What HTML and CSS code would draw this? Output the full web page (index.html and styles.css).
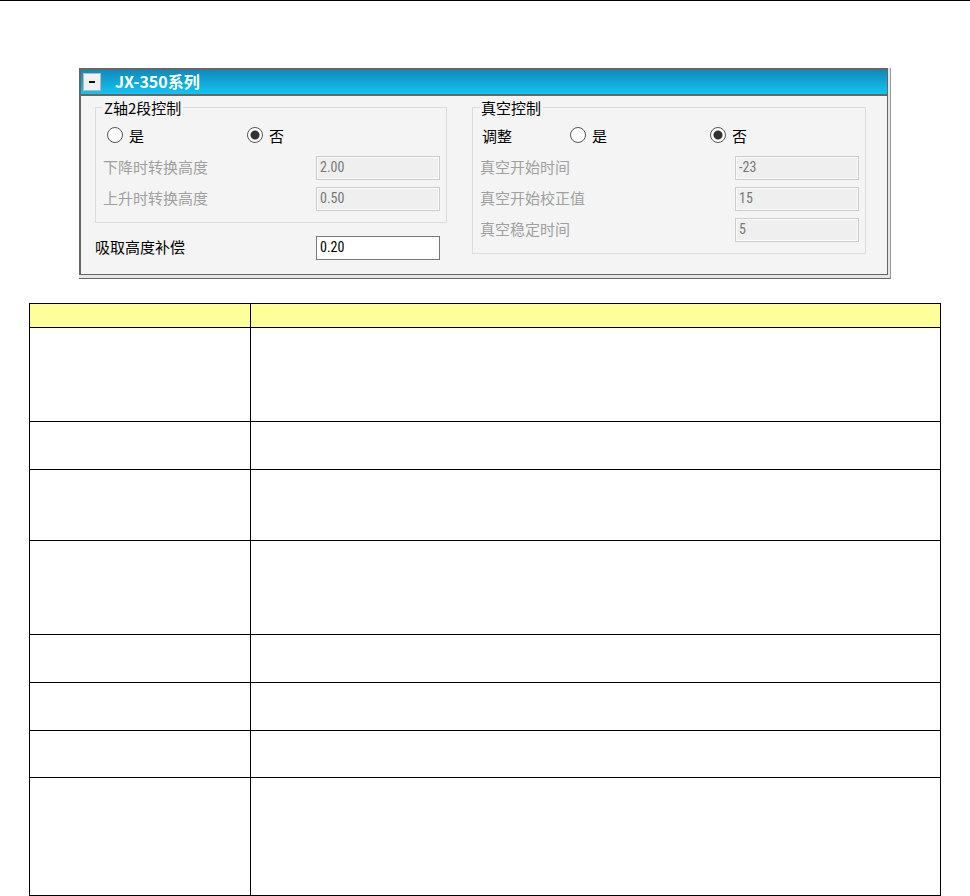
FILE: index.html
```html
<!DOCTYPE html>
<html lang="zh-CN">
<head>
<meta charset="utf-8">
<title>JX-350系列</title>
<link rel="stylesheet" href="styles.css">
</head>
<body>
<main class="page">
  <section class="frame">
    <div class="panel">
      <header class="titlebar">
        <button class="collapse" type="button" aria-label="JX-350系列"><svg width="8" height="2" viewBox="0 0 8 2"><path d="M1 0h6v2H1z" fill="#111"/></svg></button>
        <h1 class="title">JX-350系列</h1>
      </header>
      <form class="content">
        <div class="column">
          <fieldset class="group">
            <legend>Z轴2段控制</legend>
            <div class="choices">
              <label class="option"><input type="radio" name="z-axis">是</label>
              <label class="option"><input type="radio" name="z-axis" checked>否</label>
            </div>
            <div class="field disabled"><label for="down">下降时转换高度</label><input id="down" type="text" value="2.00" disabled></div>
            <div class="field disabled"><label for="up">上升时转换高度</label><input id="up" type="text" value="0.50" disabled></div>
          </fieldset>
          <div class="field standalone"><label for="pick">吸取高度补偿</label><input id="pick" type="text" value="0.20"></div>
        </div>
        <div class="column">
          <fieldset class="group">
            <legend>真空控制</legend>
            <div class="choices captioned">
              <span class="caption">调整</span>
              <label class="option"><input type="radio" name="vacuum">是</label>
              <label class="option"><input type="radio" name="vacuum" checked>否</label>
            </div>
            <div class="field disabled"><label for="start">真空开始时间</label><input id="start" type="text" value="-23" disabled></div>
            <div class="field disabled"><label for="correct">真空开始校正值</label><input id="correct" type="text" value="15" disabled></div>
            <div class="field disabled"><label for="stable">真空稳定时间</label><input id="stable" type="text" value="5" disabled></div>
          </fieldset>
        </div>
      </form>
    </div>
  </section>
  <table class="details">
    <colgroup><col class="item"><col></colgroup>
    <thead><tr class="head"><th></th><th></th></tr></thead>
    <tbody>
      <tr class="lines-4"><td></td><td></td></tr>
      <tr class="lines-2"><td></td><td></td></tr>
      <tr class="lines-3"><td></td><td></td></tr>
      <tr class="lines-4"><td></td><td></td></tr>
      <tr class="lines-2"><td></td><td></td></tr>
      <tr class="lines-2"><td></td><td></td></tr>
      <tr class="lines-2 tight"><td></td><td></td></tr>
      <tr class="lines-5"><td></td><td></td></tr>
    </tbody>
  </table>
</main>
</body>
</html>
```
FILE: styles.css
```css
* { box-sizing: border-box; }

body {
  margin: 0;
  background: #fff;
  color: #000;
  font: 15px/15px "Noto Sans CJK SC", sans-serif;
}

.page {
  border-top: 1px solid #000;
  padding: 67px 29px 0;
}

.frame {
  margin: 0 50px 24px;
  padding: 0 2px 3px 0;
  border: solid #999;
  border-width: 0 1px 1px 0;
  border-bottom-color: #666;
  background: #e6e6e6;
}

.panel {
  border: 1px solid #666;
  border-width: 2px 1px 1px 2px;
  background: #f4f4f4;
}

.titlebar {
  display: flex;
  align-items: center;
  gap: 14px;
  height: 26px;
  padding-left: 2px;
  border-bottom: 2px solid #666;
  background: linear-gradient(#108abb, #12c4f2);
}

.collapse {
  display: flex;
  align-items: center;
  justify-content: center;
  width: 18px;
  height: 18px;
  padding: 0;
  border: 1px solid #b8b8b8;
  background: #f0f0f0;
}

.title {
  margin: 0;
  padding-bottom: 2px;
  color: #fff;
  font: bold 16px/16px "Noto Sans CJK SC", sans-serif;
}

.content {
  display: grid;
  grid-template-columns: 352fr 394fr;
  column-gap: 25px;
  padding: 4px 21px 14px 14px;
}

.group {
  min-width: 0;
  margin: 0;
  padding: 8px 6px 11px 7px;
  border: 1px solid #dcdcdc;
}

.group legend {
  padding: 0 2px 0 1px;
}

.choices {
  display: flex;
  align-items: center;
  height: 24px;
  margin-bottom: 9px;
  padding-left: 4px;
}

.choices.captioned {
  padding-left: 2px;
}

.caption {
  width: 88px;
}

.option {
  display: flex;
  align-items: center;
  gap: 6px;
  width: 140px;
}

.option input {
  appearance: none;
  width: 16px;
  height: 16px;
  margin: 0;
  border: 1px solid #555;
  border-radius: 50%;
  background: #fff;
}

.option input:checked {
  background: radial-gradient(circle, #333 4px, #fff 5px);
}

.field {
  display: flex;
  align-items: center;
  justify-content: space-between;
  height: 24px;
}

.field label {
  padding-bottom: 4px;
}

.field + .field {
  margin-top: 7px;
}

.field input {
  width: 124px;
  height: 24px;
  padding: 0 3px 2px;
  border: 1px solid #777;
  background: #fff;
  color: #000;
  font: 14px/20px "Liberation Sans Narrow", "Roboto Condensed", Roboto, sans-serif;
}

.field.disabled {
  color: #a0a0a0;
}

.field.disabled input {
  border-color: #ccc;
  background: #efefef;
  box-shadow: inset 0 0 0 1px #fafafa;
  color: #777;
}

.standalone {
  margin-top: 13px;
  padding-right: 7px;
}

.details {
  width: 100%;
  border-collapse: collapse;
  table-layout: fixed;
}

.details .item { width: 221px; }

.details th,
.details td {
  padding: 0;
  border: 1px solid #000;
}

.head { height: 24px; background: #ff9; }
.lines-2 { height: 48px; }
.lines-3 { height: 71px; }
.lines-4 { height: 94px; }
.lines-5 { height: 118px; }
.tight { height: 47px; }
```
